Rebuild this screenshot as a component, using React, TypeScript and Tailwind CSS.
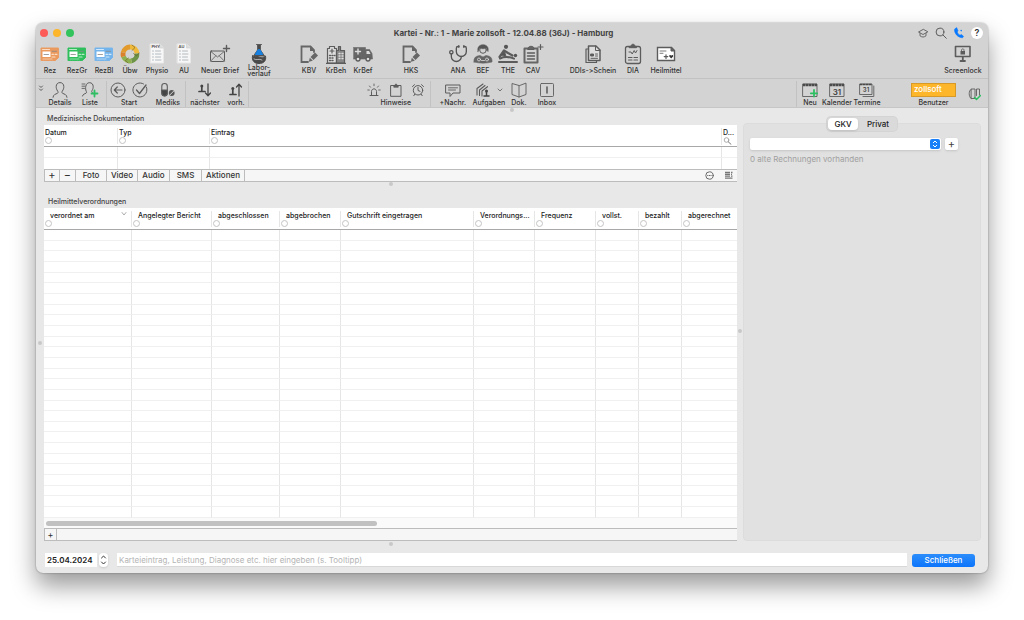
import type { ReactNode } from "react";
import clsx from "clsx";
import { Stethoscope } from "lucide-react";

const INK = "#5c5c5c";
const GREEN = "#2fbf63";

function Svg({ w = 20, h = 20, children }: { w?: number; h?: number; children: ReactNode }) {
  return (
    <svg
      width={w}
      height={h}
      viewBox={`0 0 ${w} ${h}`}
      fill="none"
      stroke={INK}
      strokeWidth={1}
      strokeLinecap="round"
      strokeLinejoin="round"
      aria-hidden="true"
      className="shrink-0"
    >
      {children}
    </svg>
  );
}

// Prescription form, tinted per type
function FormIcon({ color, soft }: { color: string; soft: string }) {
  return (
    <Svg w={20} h={16}>
      <path d="M1 2h17.500v9.500L15.500 14.500H1z" fill={color} stroke={color} strokeDasharray="1.5 .8" />
      <rect x="2.500" y="5.500" width="8" height="5.500" fill="#fff" stroke="none" />
      <path d="M2.500 3.500h7M12 8.300h1.500M15 8.300h2M12 11h3" stroke={soft} strokeWidth="1.200" />
      <path d="M4 8.500h4.500M12 5.300h4.500" stroke="#888" strokeWidth=".8" />
      <path d="M3 13h9" stroke={soft} strokeWidth=".7" />
    </Svg>
  );
}

function PaperIcon({ text }: { text: string }) {
  return (
    <Svg w={16} h={21}>
      <path d="M1.500 1h9l4 4v15h-13z" fill="#f7f7f7" stroke="#e8e8e8" />
      <path d="M10.500 1v4h4" fill="#ddd" stroke="#ccc" strokeWidth=".6" />
      <text x="2.500" y="5" fontSize="4" fontWeight="700" fill="#555" stroke="none">
        {text}
      </text>
      <path d="M3.500 8h1M6.500 8h5M3.500 11h1M6.500 11h5.500M3.500 14h1M6.500 14h5M3.500 17h1M6.500 17h5.500" stroke="#aab2b8" strokeWidth=".9" />
    </Svg>
  );
}

function TransferIcon() {
  return (
    <Svg w={20} h={20}>
      <g strokeWidth="4.800" strokeLinecap="butt">
        <path d="M3.200 8.500A7 7 0 0 1 10 3" stroke="#e39a2d" />
        <path d="M10 3a7 7 0 0 1 7 6.500" stroke="#efb93a" />
        <path d="M17 9.500A7 7 0 0 1 11.500 16.800" stroke="#6d9448" />
        <path d="M11.500 16.800A7 7 0 0 1 3.400 12.500" stroke="#8fb04e" />
        <path d="M3.400 12.500A7 7 0 0 1 3.200 8.500" stroke="#d9822b" />
      </g>
      <path d="M12 1l3 2.500-3 3M19 9l-2.500 3-3-2.500M8 19l-2.500-2.500 3-2.500" stroke="#6b5a2a" strokeWidth=".6" />
    </Svg>
  );
}

function MailPlusIcon() {
  return (
    <Svg w={22} h={20}>
      <rect x="1.500" y="7" width="14" height="10.500" rx=".8" />
      <path d="M1.800 7.500l6.700 5.500 6.700-5.500M1.800 17l4.800-5M15.200 17l-4.800-5" strokeWidth=".8" />
      <path d="M17.500 1.500v6M14.500 4.500h6" strokeWidth="1.400" />
    </Svg>
  );
}

function LabIcon() {
  return (
    <Svg w={18} h={22}>
      <path d="M6.500 1.500h5M7.500 2v5L3.500 13h11L10.500 7V2z" fill="#4a4a4a" />
      <path d="M7.800 7L5.300 11.500h7.400L10.200 7z" fill="#1780e0" stroke="#1780e0" />
      <path d="M2.500 13c2 1.500 3.500-.5 6.500 1s4.500.5 6.500-1c1 5-2 7.500-6.500 7.500S1.500 18 2.500 13z" fill="#4a4a4a" stroke="#4a4a4a" />
      <path d="M4 16c2.500 2 5-1 8 1" stroke="#ccc" strokeWidth=".8" />
    </Svg>
  );
}

function NotePenIcon() {
  return (
    <Svg>
      <path d="M9 18H2.500V2.500h9L15 6v2" strokeWidth="1.800" stroke="#666" strokeLinejoin="miter" />
      <path d="M11 2.500V7H15.500z" fill="#666" stroke="none" />
      <path d="M16 8.500l3 3-4.500 4.500-3-3z" fill="#666" stroke="none" />
      <path d="M10.800 13.800l3 3-4 1z" fill="#666" stroke="none" />
    </Svg>
  );
}

function HospitalIcon() {
  return (
    <Svg>
      <path d="M1.500 19V4.500h2v-2h5v2h2V19z" fill="#ddd" strokeWidth="1.200" />
      <path d="M10.500 19V6.500h2v-4h2v4h4V19z" fill="#888" strokeWidth="1.200" />
      <path d="M6 5v4M4 7h4" strokeWidth="1.200" />
      <path d="M3.500 11.500h1M6 11.500h1M8.500 11.500h.5M3.500 14h1M6 14h1M3.500 16.500h1M6 16.500h1" strokeWidth="1.400" />
      <path d="M13 9.500h1M16 9.500h1M13 12h1M16 12h1M13 14.500h1M16 14.500h1" stroke="#ddd" strokeWidth="1.300" />
      <path d="M.5 19.300h19" strokeWidth="1.200" />
    </Svg>
  );
}

function AmbulanceIcon() {
  return (
    <Svg>
      <path d="M0.500 3.500h12v2h4l2.500 4 .5 5.500H.5z" fill="#666" stroke="#666" strokeWidth=".6" />
      <path d="M5 5v5M2.500 7.500h5" stroke="#ddd" strokeWidth="1.400" />
      <path d="M13.500 7h2.500l1.500 3h-4z" fill="#ddd" stroke="none" />
      <circle cx="5" cy="15" r="2" fill="#ddd" strokeWidth="1.300" />
      <circle cx="15" cy="15" r="2" fill="#ddd" strokeWidth="1.300" />
    </Svg>
  );
}

function DoctorIcon() {
  return (
    <Svg>
      <circle cx="10" cy="6" r="3.300" fill="#d2d2d2" />
      <path d="M5 7.500C4 3 6.500.8 10 .8S16 3 15 7.500c-1-1-1-3-2-3.500-2 1-4 1-6 0-1 .5-1 2.500-2 3.500z" fill="#555" strokeWidth=".6" />
      <path d="M1 18c-.5-5 2.500-6 6-6.500l3 1.500 3-1.500c3.500.5 6.500 1.500 6 6.500-6 1.500-12 1.500-18 0z" fill="#666" stroke="#666" strokeWidth=".6" />
      <circle cx="6" cy="15.500" r="1.500" stroke="#ddd" strokeWidth=".8" />
      <circle cx="14" cy="15.500" r="1.500" stroke="#ddd" strokeWidth=".8" />
      <path d="M8.500 16.500h3" stroke="#ddd" strokeWidth=".8" />
    </Svg>
  );
}

function MassageIcon() {
  return (
    <Svg>
      <circle cx="8" cy="2.800" r="2.100" fill="#555" stroke="none" />
      <path d="M1.500 13L6 6.500l4 2.500 4.500 2.500" strokeWidth="2.200" />
      <path d="M2.500 11l4-3.500 1.500 5z" fill="#555" />
      <circle cx="17.500" cy="11.500" r="1.700" fill="#555" stroke="none" />
      <path d="M2 14.500c5-2.500 9-2 14 .2" strokeWidth="2" />
      <path d="M1 18h18" strokeWidth="2" />
    </Svg>
  );
}

function ClipboardPlusIcon() {
  return (
    <Svg w={22} h={22}>
      <rect x="2.500" y="5.500" width="13" height="14" strokeWidth="2" stroke="#666" />
      <path d="M6 5.500c0-3 6-3 6 0v1H6z" fill="#666" />
      <path d="M5.500 10h7M5.500 13h7M5.500 16h7" strokeWidth="1.400" />
      <path d="M18.500 1.500v5M16 4h5" strokeWidth="1.200" />
    </Svg>
  );
}

function DocsIcon() {
  return (
    <Svg w={20} h={20}>
      <path d="M5.500 5H3v13.500h10.500V17" strokeWidth="1.200" />
      <path d="M5.500 2h7.500l4 4v10.500H5.500z" fill="#ddd" strokeWidth="1.500" />
      <path d="M12.500 2v4.500H17" />
      <path d="M8 10h2.500v2H8z" fill={INK} />
      <path d="M12.500 10h2M12.500 12h2M8 14.300h6.500" />
    </Svg>
  );
}

function DiaIcon() {
  return (
    <Svg w={20} h={22}>
      <rect x="2.500" y="3.500" width="15" height="17" rx="2" strokeWidth="1.300" />
      <path d="M6.500 3.500h1.500c0-3 4-3 4 0h1.500v1.200h-7z" fill={INK} />
      <path d="M6 9h2l1.200 2 2-3.500L12.500 10 14 7.500" />
      <path d="M5.500 14.500h3.500M11 14.500h3.500M5.500 17h3.500M11 17h3.500" strokeWidth="1.200" />
    </Svg>
  );
}

function RemedyIcon() {
  return (
    <Svg w={20} h={18}>
      <path d="M1.500 2.500h14l3 3v10h-17z" fill="#fff" strokeWidth="1.400" strokeLinejoin="miter" />
      <path d="M15 2.500v3.500h3.500z" fill={INK} />
      <path d="M4 6h6M4 8.300h3" strokeWidth=".8" />
      <path d="M10 9.800v3.600M8.200 11.600h3.600" strokeWidth="1.200" />
      <path d="M15.200 13.500l-1.900-2c-.5-1.400 1.200-2 1.900-.8.700-1.200 2.400-.6 1.900.8z" fill="#333" stroke="none" />
    </Svg>
  );
}

function ScreenlockIcon() {
  return (
    <Svg w={18} h={18}>
      <rect x="1.500" y="1.500" width="14.500" height="10" strokeWidth="1.600" />
      <rect x="6.500" y="6" width="4.500" height="3.500" fill={INK} stroke="none" />
      <path d="M7.500 6V4.800c0-1.200 2.500-1.200 2.500 0V6" strokeWidth=".8" />
      <path d="M8.800 12v3M6.500 16h4.500" strokeWidth="1.800" />
    </Svg>
  );
}

function PersonIcon() {
  return (
    <Svg w={16} h={16}>
      <path d="M1 15.300c.3-3 2.500-3 4.500-4 .8-.5.600-1.600.100-2.300C4.500 7.500 4.200 6 4.200 4.600c0-2.500 1.500-4 3.800-4s3.800 1.500 3.800 4c0 1.400-.3 2.900-1.400 4.400-.5.700-.7 1.800.1 2.300 2 1 4.200 1 4.500 4" />
    </Svg>
  );
}

function PersonListIcon() {
  return (
    <Svg w={18} h={16}>
      <path d="M1 2h3M1 4.200h3M1 6.400h2.500" strokeWidth=".9" />
      <path d="M1.500 14c.5-2 2-2 3.500-2.800.8-.5.700-1.300.2-2C4.500 7.800 4.500 6 4.800 4.300 5.300 1.900 6.600.700 8.500.700c2.300 0 3.700 1.600 3.700 3.900 0 1.400-.3 2.600-1.200 4-.5.800-.3 1.700.5 2.300" />
      <path d="M13.500 8.500v6M10.500 11.500h6" stroke={GREEN} strokeWidth="1.800" />
    </Svg>
  );
}

function BackCircleIcon() {
  return (
    <Svg w={16} h={16}>
      <circle cx="8" cy="8" r="7" />
      <path d="M12 8H4.500M7.300 5L4.300 8l3 3" strokeWidth="1.200" />
    </Svg>
  );
}

function CheckCircleIcon() {
  return (
    <Svg w={16} h={16}>
      <path d="M14.300 5A7 7 0 1 1 11.500 1.900" />
      <path d="M4.500 8l3 3.500 6.500-8.500" strokeWidth="1.300" />
    </Svg>
  );
}

function PillsIcon() {
  return (
    <Svg w={16} h={16}>
      <rect x="1.800" y="1.500" width="5.500" height="12.500" rx="2.700" strokeWidth="1.100" />
      <path d="M1.800 8h5.500v3.300a2.700 2.700 0 0 1-5.500 0z" fill="#444" />
      <circle cx="11.700" cy="11" r="2.900" fill="#555" stroke="none" />
      <path d="M9.800 13l4-4" stroke="#d4d4d4" />
    </Svg>
  );
}

function NextIcon({ up }: { up?: boolean }) {
  return (
    <Svg w={14} h={16}>
      <circle cx="3.800" cy={up ? 6.5 : 4} r="1.500" fill="#444" stroke="none" />
      <path d={up ? "M1 12.500h6M3.800 8v4" : "M1 9.500h6M3.800 5.500v4"} stroke="#444" strokeWidth="1.700" />
      <path d={up ? "M10 14V2.500M7.500 5L10 2.300 12.500 5" : "M10 2v11.500M7.500 11l2.500 2.700 2.500-2.700"} stroke="#444" strokeWidth="1.300" />
    </Svg>
  );
}

function SirenIcon() {
  return (
    <Svg w={14} h={14}>
      <path d="M3 12.500h8M4.500 12V8.500c0-3.500 5-3.500 5 0V12" />
      <path d="M7 1v1.700M2.500 3l1 1.200M11.500 3l-1 1.200M.8 7h1.500M13.200 7h-1.500" strokeWidth=".9" />
    </Svg>
  );
}

function ClipIcon() {
  return (
    <Svg w={12} h={14}>
      <rect x="1" y="2.500" width="10" height="10.800" />
      <path d="M3.800 4V2.500h1.200c0-2 2-2 2 0h1.200V4z" fill={INK} strokeWidth=".7" />
    </Svg>
  );
}

function AlarmIcon() {
  return (
    <Svg w={14} h={14}>
      <circle cx="7" cy="7.300" r="4.700" />
      <path d="M7 4.500v3l2 .8M1.500 3.500l2-1.800M12.500 3.500l-2-1.800M3.800 11.200l-1 1.500M10.200 11.200l1 1.500" />
    </Svg>
  );
}

function MessageIcon() {
  return (
    <Svg w={16} h={15}>
      <path d="M1 2h14v8H8l-3 3.500V10H1z" />
      <path d="M3.500 4.800h9M3.500 7h7" strokeWidth=".9" />
    </Svg>
  );
}

function TasksIcon() {
  return (
    <Svg w={16} h={16}>
      <path d="M2 13V6.500L8 2M4.500 13.500V8L10 3.500M7 14V9l5.500-4.300" strokeWidth="1.100" />
      <circle cx="11.500" cy="9" r="1.500" fill="#444" stroke="none" />
      <path d="M9 14h5M11.500 10v3.500" stroke="#444" strokeWidth="1.500" />
    </Svg>
  );
}

function BookIcon() {
  return (
    <Svg w={16} h={16}>
      <path d="M8 3.500L1 1.500v11l7 2.500 7-2.500v-11zM8 3.500V15" strokeWidth=".9" />
    </Svg>
  );
}

function InboxIcon() {
  return (
    <Svg w={16} h={16}>
      <rect x="1.500" y="1.500" width="13" height="13" rx="1" strokeWidth=".9" />
      <path d="M8 5v6" stroke="#444" strokeWidth="1.300" />
    </Svg>
  );
}

function CalendarIcon({ day, plus, stacked }: { day?: string; plus?: boolean; stacked?: boolean }) {
  return (
    <Svg w={16} h={16}>
      {stacked && <path d="M14.800 4v10.500H4" strokeWidth=".9" />}
      <rect x="1" y="2" width={stacked ? 12 : 14} height={stacked ? 10.5 : 12.5} strokeWidth=".9" />
      <path d={stacked ? "M1 2.500h12" : "M1 3h14"} stroke="#4a4a4a" strokeWidth={stacked ? 1.6 : 2.6} strokeDasharray="2.500 .4" strokeLinecap="butt" />
      {day && (
        <text x={stacked ? 7 : 8} y={stacked ? 9.8 : 12.5} textAnchor="middle" fontSize={stacked ? 6 : 8} fontWeight="600" fill="#444" stroke="none">
          {day}
        </text>
      )}
      {plus && <path d="M12 8v6.500M8.800 11.300h6.500" stroke={GREEN} strokeWidth="1.800" />}
    </Svg>
  );
}

function CardsIcon() {
  return (
    <Svg w={14} h={14}>
      <path d="M4 2.500C1.500 3 1.500 10 4 11.500M4.500 2h3.500v9.500h-3.500zM9.500 8.500V2h3v6" strokeWidth=".9" />
      <path d="M7.500 10.500l2 2 4-4" stroke={GREEN} strokeWidth="1.500" />
    </Svg>
  );
}

function Tool({ label, width, children }: { label: string; width: string; children: ReactNode }) {
  return (
    <button type="button" className={clsx("flex flex-col items-center", width)}>
      <span className="flex h-[23px] items-center justify-center">{children}</span>
      <span className="flex h-3 items-center whitespace-pre text-center leading-[6px]">{label}</span>
    </button>
  );
}

function SmallTool({ label, width, gap = "gap-[6px]", children }: { label: string; width: string; gap?: string; children: ReactNode }) {
  return (
    <button type="button" className={clsx("flex flex-col items-center", width)}>
      <span className={clsx("flex h-[18px] items-center justify-center", gap)}>{children}</span>
      <span className="whitespace-nowrap leading-[8px]">{label}</span>
    </button>
  );
}

function Dot() {
  return <span className="size-1 rounded-full bg-[#c8c8c8]" />;
}

function Filter() {
  return <button type="button" aria-label="Filter" className="block size-[7px] rounded-full border border-[#c4c4c4]" />;
}

const verordnungen = [
  { label: "verordnet am", width: "w-[87px]", sorted: true },
  { label: "Angelegter Bericht", width: "w-[80px]" },
  { label: "abgeschlossen", width: "w-[68px]" },
  { label: "abgebrochen", width: "w-[61px]" },
  { label: "Gutschrift eingetragen", width: "w-[133px]" },
  { label: "Verordnungs...", width: "w-[61px]" },
  { label: "Frequenz", width: "w-[61px]" },
  { label: "vollst.", width: "w-[43px]" },
  { label: "bezahlt", width: "w-[43px]" },
  { label: "abgerechnet", width: "" },
];

const doku = [
  { label: "Datum", width: "w-[73px]" },
  { label: "Typ", width: "w-[92px]" },
  { label: "Eintrag", width: "" },
  { label: "D...", width: "w-[16px]", search: true },
];

const TH = "h-[22px] border-b border-[#a8a8a8] p-0 pt-[3px] text-left align-top font-medium leading-[9px] whitespace-nowrap text-[#222]";
const BAR = "flex h-[13px] items-center border-y border-[#bcbcbc] bg-[#f6f6f6]";
const BAR_BUTTON = "h-full border-r border-[#bcbcbc] leading-[11px]";

function TitleBar() {
  return (
    <div className="flex h-[19px] items-center pl-1 pr-[5px]">
      <div className="mr-4 flex gap-[5px]">
        <button type="button" aria-label="Fenster schließen" className="size-2 rounded-full bg-[#fc5b57]" />
        <button type="button" aria-label="Minimieren" className="size-2 rounded-full bg-[#fdb62b]" />
        <button type="button" aria-label="Maximieren" className="size-2 rounded-full bg-[#33c35c]" />
      </div>
      <h1 className="flex-1 text-center text-[8px] font-bold text-[#444]">
        Kartei - Nr.: 1 - Marie zollsoft - 12.04.88 (36J) - Hamburg
      </h1>
      <div className="flex items-center gap-[6px]">
        <button type="button" aria-label="Akademie">
          <Svg w={12} h={12}>
            <path d="M6 2.500L1.500 5 6 7.500 10.500 5zM3 6.500v2.300c2 1.600 4 1.600 6 0V6.500" strokeWidth=".9" />
          </Svg>
        </button>
        <button type="button" aria-label="Suche">
          <Svg w={12} h={12}>
            <circle cx="5" cy="5" r="3.900" />
            <path d="M8 8l3.300 3.300" />
          </Svg>
        </button>
        <button type="button" aria-label="Telefon">
          <Svg w={12} h={12}>
            <path d="M2.800 1L1.500 2.500C1.500 7 5 10.500 9.500 10.800L10.500 9.300 8.300 7.500 7 8.300C5.500 7.500 4.700 6.300 4.200 5L5 3.800 3.800 1z" fill="#0a7aff" stroke="#0a7aff" strokeWidth=".6" />
            <circle cx="8.200" cy="3.600" r=".8" fill="#0a7aff" stroke="none" />
          </Svg>
        </button>
        <button type="button" className="flex size-3 items-center justify-center rounded-full bg-white text-[9px] font-semibold text-[#333]">
          ?
        </button>
      </div>
    </div>
  );
}

function Toolbar() {
  return (
    <div className="flex gap-7 border-b border-[#c2c2c2] pb-px pl-1 pr-[6px]">
      <div className="flex gap-[7px]">
        <Tool label="Rez" width="w-5">
          <FormIcon color="#eb9a5f" soft="#f9dcc4" />
        </Tool>
        <Tool label="RezGr" width="w-5">
          <FormIcon color="#2fbf5c" soft="#b5ecc6" />
        </Tool>
        <Tool label="RezBl" width="w-5">
          <FormIcon color="#74b4ec" soft="#d2e8fb" />
        </Tool>
        <Tool label="Übw" width="w-[18px]">
          <TransferIcon />
        </Tool>
        <Tool label="Physio" width="w-[22px]">
          <PaperIcon text="PHY" />
        </Tool>
        <Tool label="AU" width="w-[18px]">
          <PaperIcon text="AU" />
        </Tool>
        <Tool label="Neuer Brief" width="w-10">
          <MailPlusIcon />
        </Tool>
        <Tool label={"Labor-\nverlauf"} width="w-6">
          <LabIcon />
        </Tool>
      </div>
      <div className="flex gap-[7px]">
        <Tool label="KBV" width="w-5">
          <NotePenIcon />
        </Tool>
        <Tool label="KrBeh" width="w-5">
          <HospitalIcon />
        </Tool>
        <Tool label="KrBef" width="w-5">
          <AmbulanceIcon />
        </Tool>
      </div>
      <Tool label="HKS" width="w-5">
        <NotePenIcon />
      </Tool>
      <div className="flex gap-[7px]">
        <Tool label="ANA" width="w-[18px]">
          <Stethoscope size={20} strokeWidth={1.6} color="#555" className="-scale-x-100" />
        </Tool>
        <Tool label="BEF" width="w-[18px]">
          <DoctorIcon />
        </Tool>
        <Tool label="THE" width="w-[18px]">
          <MassageIcon />
        </Tool>
        <Tool label="CAV" width="w-[18px]">
          <ClipboardPlusIcon />
        </Tool>
      </div>
      <div className="flex gap-[7px]">
        <Tool label="DDIs->Schein" width="w-[46px]">
          <DocsIcon />
        </Tool>
        <Tool label="DIA" width="w-5">
          <DiaIcon />
        </Tool>
        <Tool label="Heilmittel" width="w-8">
          <RemedyIcon />
        </Tool>
      </div>
      <div className="ml-auto">
        <Tool label="Screenlock" width="w-[38px]">
          <ScreenlockIcon />
        </Tool>
      </div>
    </div>
  );
}

function PatientBar() {
  return (
    <div className="flex border-b border-[#c6c6c6] pt-[2px]">
      <div className="flex border-r border-[#c2c2c2] px-[2px]">
        <button type="button" aria-label="Mehr" className="self-start pt-1">
          <Svg w={6} h={7}>
            <path d="M1.500 1L3 2.500 4.500 1M1.500 4L3 5.500 4.500 4" />
          </Svg>
        </button>
        <SmallTool label="Details" width="w-8">
          <PersonIcon />
        </SmallTool>
        <SmallTool label="Liste" width="w-7">
          <PersonListIcon />
        </SmallTool>
      </div>
      <div className="flex border-r border-[#c2c2c2]">
        <SmallTool label="Start" width="w-11">
          <BackCircleIcon />
          <CheckCircleIcon />
        </SmallTool>
        <SmallTool label="Mediks" width="w-[34px]">
          <PillsIcon />
        </SmallTool>
      </div>
      <div className="flex border-r border-[#c2c2c2]">
        <SmallTool label="nächster" width="w-[38px]">
          <NextIcon />
        </SmallTool>
        <SmallTool label="vorh." width="w-6">
          <NextIcon up />
        </SmallTool>
      </div>
      <div className="flex-[10]" />
      <div className="border-r border-[#c2c2c2]">
        <SmallTool label="Hinweise" width="w-[68px]" gap="gap-[9px]">
          <SirenIcon />
          <ClipIcon />
          <AlarmIcon />
        </SmallTool>
      </div>
      <div className="flex">
        <SmallTool label="+Nachr." width="w-11">
          <MessageIcon />
        </SmallTool>
        <SmallTool label="Aufgaben" width="w-7">
          <TasksIcon />
          <Svg w={6} h={6}>
            <path d="M1 2l2 2 2-2" strokeWidth=".8" />
          </Svg>
        </SmallTool>
        <SmallTool label="Dok." width="w-8">
          <BookIcon />
        </SmallTool>
        <SmallTool label="Inbox" width="w-6">
          <InboxIcon />
        </SmallTool>
      </div>
      <div className="flex-[21]" />
      <div className="flex border-l border-[#c2c2c2]">
        <SmallTool label="Neu" width="w-[26px]">
          <CalendarIcon plus />
        </SmallTool>
        <SmallTool label="Kalender" width="w-7">
          <CalendarIcon day="31" />
        </SmallTool>
        <SmallTool label="Termine" width="w-8">
          <CalendarIcon day="31" stacked />
        </SmallTool>
      </div>
      <div className="ml-7 flex items-center gap-[11px] pr-[7px]">
        <button type="button" className="flex w-[45px] flex-col items-center">
          <span className="my-[2px] h-[14px] w-full border border-[#d79a28] bg-[#fdb52a] px-[2px] text-left text-[8px] leading-[11px] text-white">
            zollsoft
          </span>
          <span className="leading-[8px]">Benutzer</span>
        </button>
        <button type="button" aria-label="Karten">
          <CardsIcon />
        </button>
      </div>
    </div>
  );
}

function Dokumentation() {
  return (
    <section>
      <h2 className="pb-[2px] pl-[3px] leading-[9px] text-[#444]">Medizinische Dokumentation</h2>
      <table className="w-full table-fixed border-separate border-spacing-0 bg-white">
        <thead>
          <tr>
            {doku.map((col, i) => (
              <th key={col.label} className={clsx(TH, col.width)}>
                <div className={clsx("pl-px", i > 0 && "border-l border-[#e6e6e6]")}>
                  {col.label}
                  {col.search ? (
                    <Svg w={9} h={8}>
                      <circle cx="3.500" cy="3" r="2.300" stroke="#999" strokeWidth=".8" />
                      <path d="M5.300 4.800L8 7.300" stroke="#777" />
                    </Svg>
                  ) : (
                    <Filter />
                  )}
                </div>
              </th>
            ))}
          </tr>
        </thead>
        <tbody>
          {[0, 1].map((row) => (
            <tr key={row}>
              {doku.map((col, i) => (
                <td key={col.label} className={clsx("h-[11px] p-0", row === 0 && "border-b border-b-[#f0f0f0]", i > 0 && "border-l border-l-[#e6e6e6]")} />
              ))}
            </tr>
          ))}
        </tbody>
      </table>
      <div className={clsx(BAR, "pr-1 text-[8px] text-[#333]")}>
        <button type="button" aria-label="Hinzufügen" className={clsx(BAR_BUTTON, "w-4 border-l text-[11px] font-normal")}>
          +
        </button>
        <button type="button" aria-label="Entfernen" className={clsx(BAR_BUTTON, "w-4 text-[11px] font-normal")}>
          −
        </button>
        <button type="button" className={clsx(BAR_BUTTON, "w-[31px]")}>Foto</button>
        <button type="button" className={clsx(BAR_BUTTON, "w-[31px]")}>Video</button>
        <button type="button" className={clsx(BAR_BUTTON, "w-8")}>Audio</button>
        <button type="button" className={clsx(BAR_BUTTON, "w-8")}>SMS</button>
        <button type="button" className={clsx(BAR_BUTTON, "w-[43px]")}>Aktionen</button>
        <span className="flex-1" />
        <button type="button" aria-label="Optionen" className="mr-[10px]">
          <Svg w={9} h={9}>
            <circle cx="4.500" cy="4.500" r="3.700" strokeWidth=".9" />
            <path d="M2.700 4.500h3.600" strokeDasharray=".2 1.400" />
          </Svg>
        </button>
        <button type="button" aria-label="Ansicht">
          <Svg w={9} h={9}>
            <path d="M1 1.500h5M1 3.300h5M1 5.200h5M1 7.200h7.500M7 1.500h1.500M7 3.300h1M7 5.200h1.500" stroke="#777" strokeWidth="1.300" strokeLinecap="butt" />
          </Svg>
        </button>
      </div>
    </section>
  );
}

function Verordnungen() {
  return (
    <section className="flex min-h-0 flex-1 flex-col">
      <h2 className="pb-[2px] pl-1 leading-[9px] text-[#444]">Heilmittelverordnungen</h2>
      <div className="min-h-0 flex-1 bg-white">
        <table className="h-full w-full table-fixed border-separate border-spacing-0">
          <thead>
            <tr>
              {verordnungen.map((col, i) => (
                <th key={col.label} className={clsx(TH, col.width)}>
                  <div className={clsx("pl-px", i > 0 && "border-l border-[#e6e6e6]")}>
                    <div className="flex justify-between pl-[5px] pr-1">
                      {col.label}
                      {col.sorted && (
                        <Svg w={6} h={6}>
                          <path d="M1 1.500L3 4l2-2.500" stroke="#999" strokeWidth=".8" />
                        </Svg>
                      )}
                    </div>
                    <Filter />
                  </div>
                </th>
              ))}
            </tr>
          </thead>
          <tbody>
            {Array.from({ length: 27 }, (_, row) => (
              <tr key={row}>
                {verordnungen.map((col, i) => (
                  <td key={col.label} className={clsx("border-b border-b-[#f0f0f0] p-0", i > 0 && "border-l border-l-[#e6e6e6]")} />
                ))}
              </tr>
            ))}
          </tbody>
        </table>
      </div>
      <div className="flex h-[10px] items-center bg-[#fafafa] px-[2px]">
        <div className="h-[5px] w-[48%] rounded-full bg-[#c1c1c1]" />
      </div>
      <div className={BAR}>
        <button type="button" aria-label="Verordnung hinzufügen" className={clsx(BAR_BUTTON, "w-[13px] border-l text-[9px] font-normal")}>
          +
        </button>
      </div>
    </section>
  );
}

function Rechnungen() {
  return (
    <aside className="flex w-[238px] flex-col items-center">
      <div className="z-10 flex h-[14px] rounded bg-[#dadada] text-[8px] leading-[12px] text-[#222] ring-1 ring-[#d4d4d4]">
        <button type="button" className="m-px w-[30px] rounded bg-white font-medium shadow-sm">GKV</button>
        <button type="button" className="w-[38px]">Privat</button>
      </div>
      <div className="-mt-2 w-full flex-1 rounded border border-[#dcdcdc] bg-[#e1e1e1] pl-[6px] pt-[14px]">
        <div className="flex items-center gap-1">
          <div className="relative">
            <select aria-label="Rechnung" className="block h-3 w-[191px] appearance-none rounded-xs bg-white shadow-sm">
              <option></option>
            </select>
            <span className="pointer-events-none absolute right-px top-px flex size-[10px] items-center justify-center rounded-xs bg-[#1a80f8]">
              <svg width="6" height="8" viewBox="0 0 6 8" fill="none" stroke="#fff">
                <path d="M1 3l2-2 2 2M1 5l2 2 2-2" />
              </svg>
            </span>
          </div>
          <button type="button" aria-label="Neue Rechnung" className="h-3 w-[13px] rounded-xs bg-white text-[11px] font-normal leading-[11px] text-[#444] shadow-sm">
            +
          </button>
        </div>
        <p className="pt-1 text-[8px] font-normal leading-[10px] text-[#a0a0a0]">0 alte Rechnungen vorhanden</p>
      </div>
    </aside>
  );
}

function EntryBar() {
  return (
    <form className="flex items-center pb-[6px] pl-[9px] pr-[13px]" onSubmit={(e) => e.preventDefault()}>
      <input
        aria-label="Datum"
        defaultValue="25.04.2024"
        className="h-[14px] w-[52px] bg-white pl-[2px] text-[8px] font-semibold text-[#222] outline-none"
      />
      <button type="button" aria-label="Datum ändern" className="ml-[2px] flex h-[14px] w-[9px] items-center justify-center rounded bg-white shadow-sm">
        <svg width="7" height="12" viewBox="0 0 7 12" fill="none" stroke="#333" strokeLinecap="round">
          <path d="M1.500 4l2-2 2 2M1.500 8l2 2 2-2" />
        </svg>
      </button>
      <input
        aria-label="Karteieintrag"
        placeholder="Karteieintrag, Leistung, Diagnose etc. hier eingeben (s. Tooltipp)"
        className="ml-[9px] h-[14px] flex-1 border-b border-[#d8d8d8] bg-white pl-[2px] text-[8px] font-normal outline-none placeholder:text-[#b4b4b4]"
      />
      <button type="submit" className="ml-[5px] h-[13px] w-[63px] rounded-[3px] bg-linear-to-b from-[#2b8dfb] to-[#0a74fb] text-[8px] font-medium leading-[13px] text-white">
        Schließen
      </button>
    </form>
  );
}

export default function App() {
  return (
    <div className="flex h-screen flex-col bg-white px-9 pb-[47px] pt-[23px] font-['Inter','Liberation_Sans',sans-serif] text-[7px] font-medium text-[#333] [font-variant-ligatures:none]">
      <main className="flex min-h-0 flex-1 flex-col overflow-hidden rounded-[7px] bg-[#e8e8e8] shadow-[0_13px_24px_rgba(0,0,0,0.4),0_0_2px_rgba(0,0,0,0.4)]">
        <header className="bg-[#d3d3d3]">
          <TitleBar />
          <Toolbar />
          <PatientBar />
        </header>
        <div className="flex h-1 items-center justify-center">
          <Dot />
        </div>
        <div className="flex min-h-0 flex-1">
          <div className="flex w-2 items-center justify-center pt-8">
            <Dot />
          </div>
          <div className="flex min-w-0 flex-1 flex-col pt-[2px]">
            <Dokumentation />
            <div className="flex h-[15px] items-start justify-center">
              <Dot />
            </div>
            <Verordnungen />
          </div>
          <div className="flex w-[6px] items-center justify-center pt-2">
            <Dot />
          </div>
          <div className="flex pr-[7px] pt-[5px]">
            <Rechnungen />
          </div>
        </div>
        <div className="flex h-3 items-start pr-[251px] pt-px">
          <span className="flex flex-1 justify-center pl-[8px]">
            <Dot />
          </span>
        </div>
        <EntryBar />
      </main>
    </div>
  );
}
